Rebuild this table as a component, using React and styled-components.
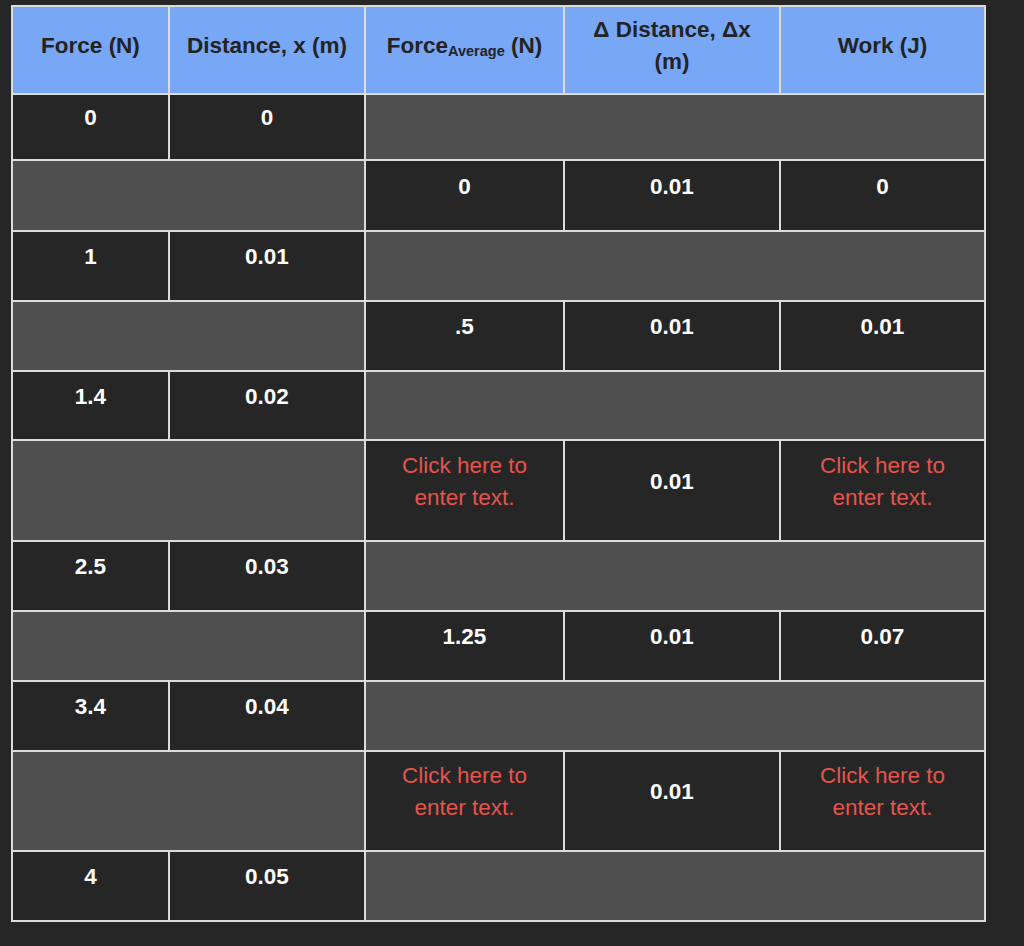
import React from "react";
import styled, { createGlobalStyle } from "styled-components";

const Global = createGlobalStyle`
  html, body {
    margin: 0;
    padding: 0;
    background: #262626;
  }
  body {
    font-family: "Liberation Sans", Arial, Helvetica, sans-serif;
  }
`;

const Page = styled.div`
  min-height: 946px;
  padding: 5px 0 0 11px;
  box-sizing: border-box;
  background: #262626;
`;

const Table = styled.div`
  display: inline-grid;
  grid-template-columns: 155px 194px 197px 214px 203px;
  grid-template-rows: 86px 64px 69px 68px 68px 67px 99px 68px 68px 68px 98px 68px;
  gap: 2px;
  padding: 2px;
  background: #dcdcdc;
`;

const HeaderCell = styled.div`
  background: #78a7f6;
  color: #232323;
  font-weight: 700;
  font-size: 22.5px;
  line-height: 32px;
  display: flex;
  align-items: center;
  justify-content: center;
  text-align: center;
  padding: 0 10px 8px;
`;

const Sub = styled.sub`
  font-size: 14.5px;
  line-height: 0;
  vertical-align: -3px;
`;

const Cell = styled.div`
  background: #262626;
  display: flex;
  align-items: center;
  justify-content: center;
  text-align: center;
  padding: 0 16px 18px;
  font-size: 22.5px;
  line-height: 32px;
  color: ${(p) => (p.$placeholder ? "#e8544c" : "#ffffff")};
  font-weight: ${(p) => (p.$placeholder ? 400 : 700)};
`;

const Filler = styled.div`
  background: #505050;
  grid-column: span ${(p) => p.$span};
`;

const PH = "Click here to enter text.";

const rows = [
  { kind: "point", f: "0", x: "0" },
  { kind: "interval", avg: "0", dx: "0.01", w: "0" },
  { kind: "point", f: "1", x: "0.01" },
  { kind: "interval", avg: ".5", dx: "0.01", w: "0.01" },
  { kind: "point", f: "1.4", x: "0.02" },
  { kind: "interval", avg: null, dx: "0.01", w: null },
  { kind: "point", f: "2.5", x: "0.03" },
  { kind: "interval", avg: "1.25", dx: "0.01", w: "0.07" },
  { kind: "point", f: "3.4", x: "0.04" },
  { kind: "interval", avg: null, dx: "0.01", w: null },
  { kind: "point", f: "4", x: "0.05" },
];

const Value = ({ v }) =>
  v === null ? <Cell $placeholder>{PH}</Cell> : <Cell>{v}</Cell>;

export default function App() {
  return (
    <>
      <Global />
      <Page>
        <Table>
          <HeaderCell>Force (N)</HeaderCell>
          <HeaderCell>Distance, x (m)</HeaderCell>
          <HeaderCell>
            <span>
              Force<Sub>Average</Sub> (N)
            </span>
          </HeaderCell>
          <HeaderCell>
            <span>
              Δ Distance, Δx
              <br />
              (m)
            </span>
          </HeaderCell>
          <HeaderCell>Work (J)</HeaderCell>
          {rows.map((r, i) =>
            r.kind === "point" ? (
              <React.Fragment key={i}>
                <Cell>{r.f}</Cell>
                <Cell>{r.x}</Cell>
                <Filler $span={3} />
              </React.Fragment>
            ) : (
              <React.Fragment key={i}>
                <Filler $span={2} />
                <Value v={r.avg} />
                <Value v={r.dx} />
                <Value v={r.w} />
              </React.Fragment>
            )
          )}
        </Table>
      </Page>
    </>
  );
}
